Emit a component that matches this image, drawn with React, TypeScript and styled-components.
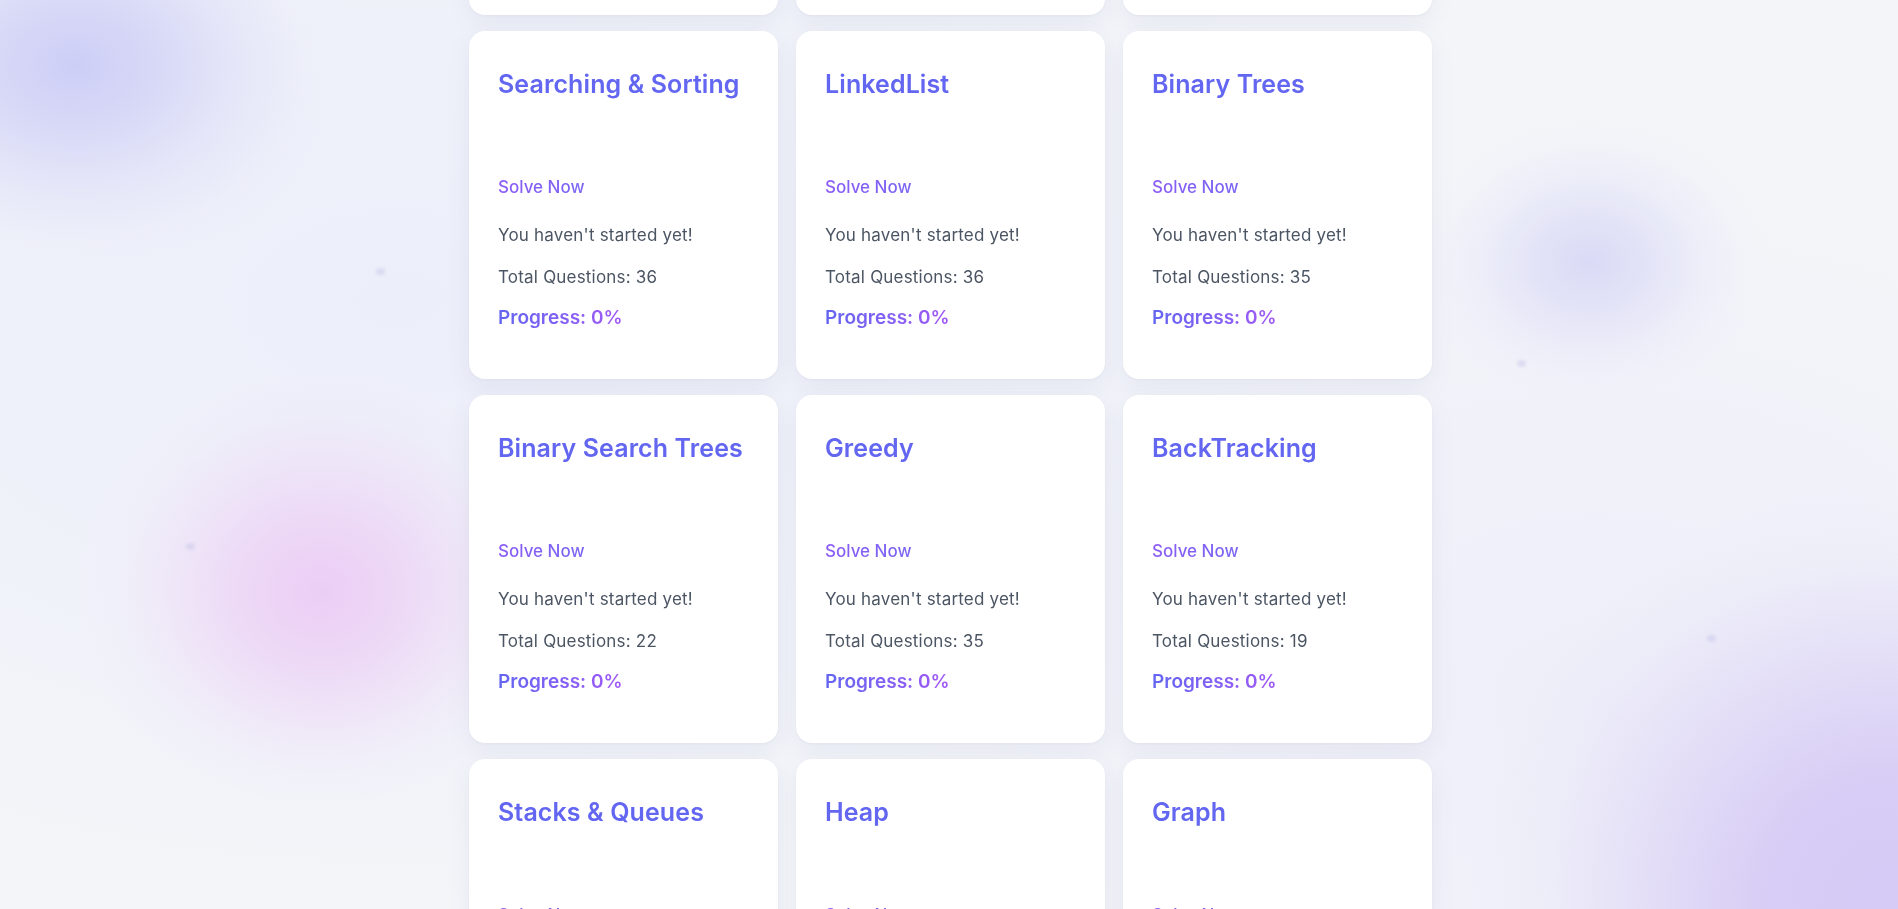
import React from "react";
import styled, { createGlobalStyle } from "styled-components";

const GlobalStyle = createGlobalStyle`
  * { box-sizing: border-box; }
  html, body { margin: 0; padding: 0; }
  body {
    background: #f2f4f9;
    font-family: Inter, "Noto Sans", "Liberation Sans", sans-serif;
    overflow: hidden;
  }
`;

const Backdrop = styled.div`
  position: fixed;
  inset: 0;
  z-index: 0;
  background:
    radial-gradient(ellipse 280px 210px at 75px 65px, rgba(205, 206, 246, 1) 0%, rgba(210, 211, 246, 0.8) 30%, rgba(216, 217, 247, 0.4) 60%, rgba(222, 223, 247, 0.12) 82%, rgba(222, 223, 247, 0) 100%),
    radial-gradient(ellipse 245px 220px at 322px 592px, rgba(236, 206, 245, 1) 0%, rgba(236, 208, 245, 0.78) 30%, rgba(237, 212, 245, 0.38) 60%, rgba(237, 215, 245, 0.1) 82%, rgba(237, 215, 245, 0) 100%),
    radial-gradient(ellipse 180px 145px at 1590px 262px, rgba(218, 218, 246, 1) 0%, rgba(220, 220, 246, 0.72) 30%, rgba(223, 223, 247, 0.32) 60%, rgba(225, 225, 247, 0.08) 82%, rgba(225, 225, 247, 0) 100%),
    radial-gradient(ellipse 420px 420px at 1890px 905px, rgba(213, 202, 245, 1) 0%, rgba(214, 203, 245, 0.95) 30%, rgba(217, 207, 245, 0.55) 58%, rgba(222, 214, 246, 0.15) 82%, rgba(222, 214, 246, 0) 100%),
    radial-gradient(ellipse 1000px 600px at 400px 300px, rgba(236, 238, 250, 1), rgba(236, 238, 250, 0) 100%),
    radial-gradient(ellipse 700px 500px at 1600px 700px, rgba(238, 238, 249, 1), rgba(238, 238, 249, 0) 100%),
    #f3f5f9;
`;

const Particle = styled.span<{ $x: number; $y: number }>`
  position: absolute;
  left: ${(p) => p.$x}px;
  top: ${(p) => p.$y}px;
  width: 9px;
  height: 7px;
  border-radius: 50%;
  background: rgba(190, 190, 232, 0.4);
  filter: blur(1.5px);
`;

const Page = styled.main`
  position: relative;
  z-index: 1;
  display: flex;
  justify-content: center;
  padding-left: 3px;
`;

const Grid = styled.section`
  display: grid;
  grid-template-columns: repeat(3, 309px);
  grid-auto-rows: 348px;
  column-gap: 18px;
  row-gap: 16px;
  margin-top: -333px;
`;

const Card = styled.article`
  background: #ffffff;
  border-radius: 16px;
  box-shadow: 0 8px 24px rgba(90, 96, 140, 0.08), 0 1px 3px rgba(90, 96, 140, 0.05);
  padding: 37px 29px 0;
  display: flex;
  flex-direction: column;
  align-items: flex-start;
`;

const Title = styled.h2`
  margin: 0 0 75px;
  font-size: 25px;
  line-height: 32px;
  font-weight: 600;
  color: #6366f1;
  letter-spacing: 0.1px;
  white-space: nowrap;
`;

const gradientText = `
  background-clip: text;
  -webkit-background-clip: text;
  color: transparent;
  -webkit-text-fill-color: transparent;
`;

const SolveLink = styled.a`
  margin: 0 0 23px;
  font-size: 17px;
  line-height: 24px;
  font-weight: 500;
  text-decoration: none;
  background-image: linear-gradient(90deg, #8b5cf6, #7a66f3);
  ${gradientText}
`;

const Info = styled.p<{ $gap: number }>`
  margin: 0 0 ${(p) => p.$gap}px;
  font-size: 17px;
  line-height: 26px;
  font-weight: 400;
  letter-spacing: 0.2px;
  color: #4b5563;
`;

const Progress = styled.p`
  margin: 0;
  font-size: 19px;
  line-height: 28px;
  font-weight: 600;
  background-image: linear-gradient(90deg, #6366f1, #a259f6);
  ${gradientText}
`;

type Topic = { title: string; total: number };

const topics: Topic[] = [
  { title: "Arrays", total: 36 },
  { title: "Strings", total: 43 },
  { title: "Recursion", total: 21 },
  { title: "Searching & Sorting", total: 36 },
  { title: "LinkedList", total: 36 },
  { title: "Binary Trees", total: 35 },
  { title: "Binary Search Trees", total: 22 },
  { title: "Greedy", total: 35 },
  { title: "BackTracking", total: 19 },
  { title: "Stacks & Queues", total: 38 },
  { title: "Heap", total: 18 },
  { title: "Graph", total: 44 },
];

const particles = [
  { x: 376, y: 268 },
  { x: 186, y: 543 },
  { x: 1517, y: 360 },
  { x: 1707, y: 635 },
];

export default function App() {
  return (
    <>
      <GlobalStyle />
      <Backdrop>
        {particles.map((p, i) => (
          <Particle key={i} $x={p.x} $y={p.y} />
        ))}
      </Backdrop>
      <Page>
        <Grid>
          {topics.map((t) => (
            <Card key={t.title}>
              <Title>{t.title}</Title>
              <SolveLink href="#">Solve Now</SolveLink>
              <Info $gap={16}>You haven't started yet!</Info>
              <Info $gap={14}>Total Questions: {t.total}</Info>
              <Progress>Progress: 0%</Progress>
            </Card>
          ))}
        </Grid>
      </Page>
    </>
  );
}
